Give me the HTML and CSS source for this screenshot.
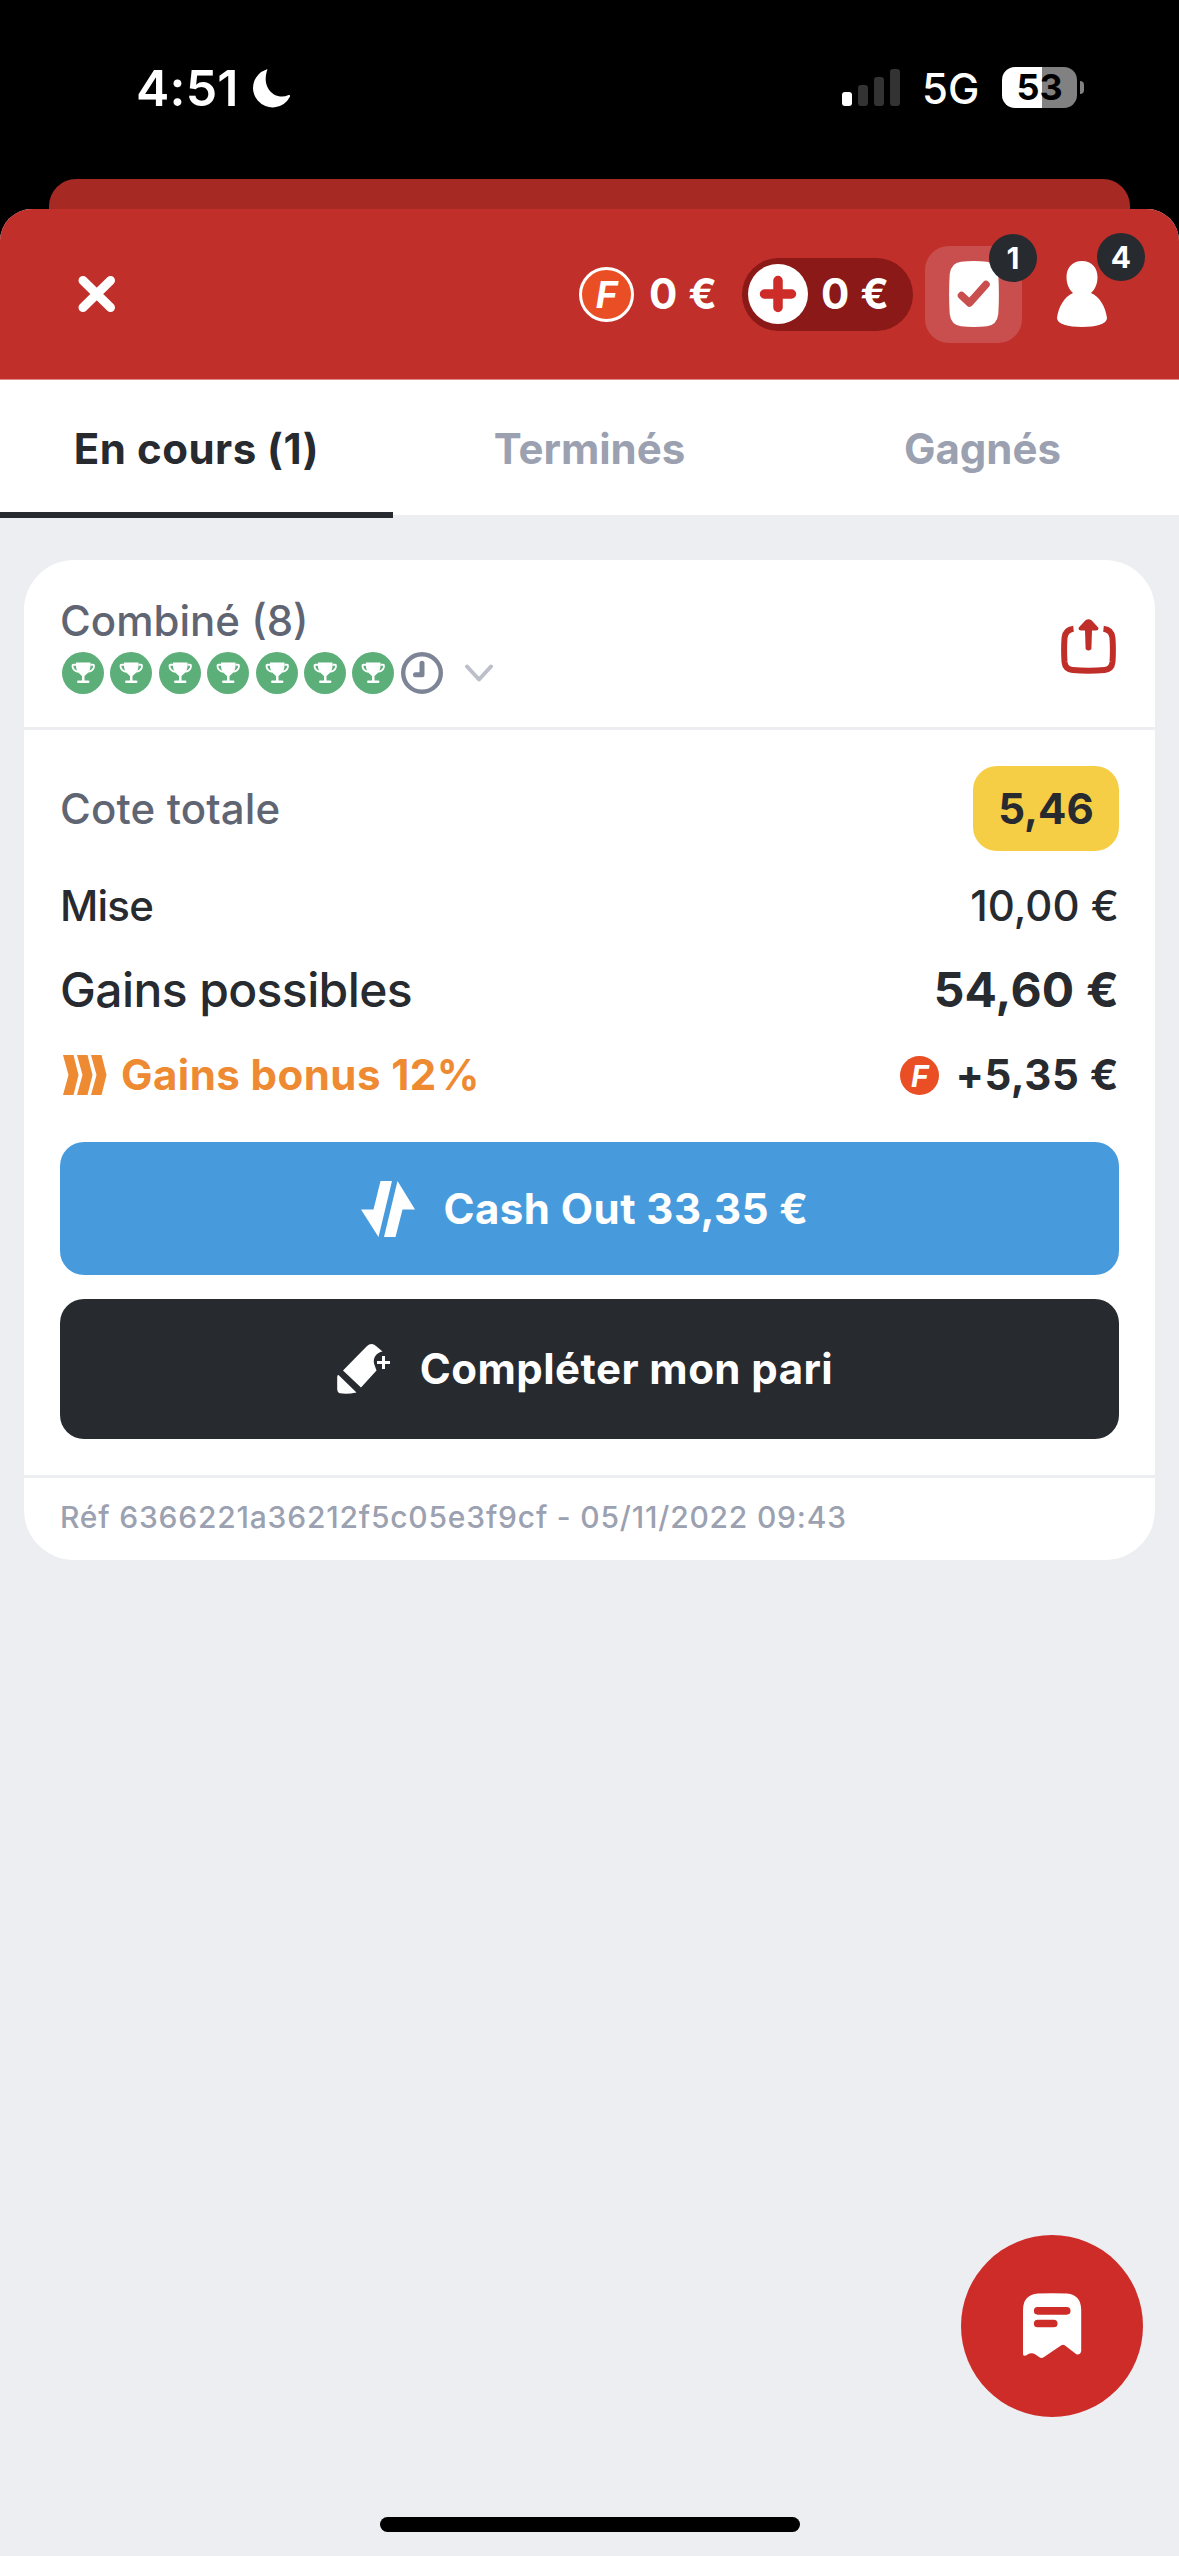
FILE: index.html
```html
<!DOCTYPE html>
<html lang="fr">
<head>
<meta charset="utf-8">
<title>Mes paris</title>
<link rel="stylesheet" href="styles.css">
</head>
<body>
<svg class="defs" width="0" height="0" aria-hidden="true">
  <symbol id="trophy" viewBox="0 0 42 42">
    <circle cx="21" cy="21" r="21" fill="#5caf78"/>
    <path d="M14 10.500h14.500c.3 5.500-.6 8.500-3 10.800l-3 2.700v4.600h3.700a1.200 1.200 0 0 1 0 2.500H16.300a1.200 1.200 0 0 1 0-2.500H20V24l-3-2.700c-2.400-2.300-3.300-5.300-3-10.800z" fill="#fff"/>
    <path d="M14 12.700h-2.500q-1 0-1 1c0 3.300 1.800 5.300 5.500 6M28.500 12.700H31q1 0 1 1c0 3.300-1.800 5.300-5.500 6" fill="none" stroke="#fff" stroke-width="1.900"/>
  </symbol>
</svg>

<div class="status">
  <span class="time">4:51</span>
  <svg class="moon" width="40" height="40" viewBox="0 0 40 40"><path d="M15.500.4C17 0 16 1.400 15.600 3 13 13 16 21 23 25.500c5 2.600 10 2.500 14 .8 2-.8 2.400 0 1.900 1.500A19.500 19.500 0 1 1 15.500.4z" fill="#fff"/></svg>
  <svg class="signal" width="58" height="38" viewBox="0 0 58 38"><rect x="0" y="24" width="10" height="14" rx="3" fill="#fff"/><g fill="#333"><rect x="16" y="17" width="10" height="21" rx="3"/><rect x="32" y="9" width="10" height="29" rx="3"/><rect x="48" y="1" width="10" height="37" rx="3"/></g></svg>
  <span class="net">5G</span>
  <span class="battery">53</span>
  <span class="nub"></span>
</div>
<div class="back-sheet"></div>

<main class="sheet">
  <header class="header">
    <svg class="close" width="38" height="38" viewBox="0 0 38 38"><path d="M5 5.500l27.500 27M32.500 5.500L5 32.500" stroke="#fff" stroke-width="9" stroke-linecap="round"/></svg>
    <div class="freebet"><span class="coin">F</span><span class="amount">0 €</span></div>
    <div class="wallet">
      <svg width="60" height="60" viewBox="0 0 60 60"><circle cx="30" cy="30" r="30" fill="#fff"/><path d="M30 16.500v27M16.500 30h27" stroke="#ce2c28" stroke-width="9.500" stroke-linecap="round"/></svg>
      <span class="amount">0 €</span>
    </div>
    <div class="bets">
      <svg width="50" height="66" viewBox="0 0 50 66"><path d="M12 .8Q25-.8 38 .8 48 2 49.300 13 50.500 33 49.300 53 48 64 38 65.200 25 66.800 12 65.200 2 64 .7 53-.5 33 .7 13 2 2 12 .8z" fill="#fff"/><path d="M12.500 34.500l8 7.500L37 23.500" fill="none" stroke="#c94f4e" stroke-width="7.500" stroke-linecap="round" stroke-linejoin="round"/></svg>
      <span class="badge">1</span>
    </div>
    <div class="profile">
      <svg width="50" height="66" viewBox="0 0 50 66"><path d="M25 0c10 0 15.500 7 15.500 16 0 7-2.500 12.500-6.500 16C43 36 48.500 46 50 57c0 6-11 9-25 9S0 63 0 57C1.500 46 7 36 16 32c-4-3.500-6.500-9-6.500-16C9.500 7 15 0 25 0z" fill="#fff"/></svg>
      <span class="badge">4</span>
    </div>
  </header>

  <nav class="tabs">
    <a class="tab active">En cours (1)</a>
    <a class="tab">Terminés</a>
    <a class="tab">Gagnés</a>
  </nav>

  <article class="card">
    <div class="card-head">
      <div>
        <div class="kind">Combiné (8)</div>
        <div class="legs">
          <svg><use href="#trophy"/></svg><svg><use href="#trophy"/></svg><svg><use href="#trophy"/></svg><svg><use href="#trophy"/></svg><svg><use href="#trophy"/></svg><svg><use href="#trophy"/></svg><svg><use href="#trophy"/></svg>
          <svg viewBox="0 0 42 42" fill="none" stroke="#7c8496"><circle cx="21" cy="21" r="18.800" stroke-width="4.400"/><path d="M21 11.200V22.800h-6.500" stroke-width="5" stroke-linecap="round" stroke-linejoin="round"/></svg>
          <svg class="chevron" viewBox="0 0 28 18"><path d="M2 2.500l12 13 12-13" fill="none" stroke="#bcbfca" stroke-width="4" stroke-linecap="round" stroke-linejoin="round"/></svg>
        </div>
      </div>
      <svg class="share" width="55" height="56" viewBox="0 0 55 56"><path d="M12.500 9.800C6 10.500 4 14 3.500 19c-.6 9-.6 15 0 24 .5 5 3 7.500 8 8 10 .8 22 .8 32 0 5-.5 7.500-3 8-8 .6-9 .6-15 0-24C51 14 49 10.500 42.500 9.800" fill="none" stroke="#c02e2a" stroke-width="6"/><path d="M24.500 1.200q3-2 6 0l6.500 7q1.500 3-2 3.300h-4l-.6 18.500q-2.900 3-5.800 0L24 11.500h-4q-3.500-.3-2-3.300z" fill="#c02e2a"/></svg>
    </div>

    <div class="card-body">
      <div class="row odds"><span class="muted">Cote totale</span><b class="odds-value">5,46</b></div>
      <div class="row stake"><span class="stake-label">Mise</span><span>10,00 €</span></div>
      <div class="row win"><span class="win-label">Gains possibles</span><b>54,60 €</b></div>
      <div class="row bonus">
        <svg width="44" height="40" viewBox="0 0 44 40" fill="#ee8a32"><path d="M0 0h10.500L15.500 20 10.500 40H0l5.500-20zM14 0h10.500l5 20-5 20H14l5.500-20zM28 0h10.500l5 20-5 20H28l5.500-20z"/></svg>
        <span class="bonus-label">Gains bonus 12%</span>
        <i class="coin small">F</i>
        <b class="bonus-value">+5,35 €</b>
      </div>
      <button class="btn cashout">
        <svg width="54" height="56" viewBox="0 0 54 56" fill="#fff"><path d="M19.500 0H31L17.500 56 0 28.500h12.500zM36.500 0L54 28.500H41.500L34.500 56H23z"/></svg>
        <span>Cash Out 33,35 €</span>
      </button>
      <button class="btn complete">
        <svg width="53" height="50" viewBox="0 0 53 50" fill="#fff"><path d="M29.500 2.500q5-4.500 9.500-.5l6.500 5.500c-7 1.500-9.500 7-8.500 12l2.500 7L24 43.500 6 26.500zM1.500 31l18 17.500Q10 50.500 3 49.300 0 48.500.2 44V33q.2-2.500 1.300-2zM45 12h3v5h5v3h-5v5h-3v-5h-5v-3h5z"/></svg>
        <span>Compléter mon pari</span>
      </button>
    </div>
    <div class="card-foot">Réf 6366221a36212f5c05e3f9cf - 05/11/2022 09:43</div>
  </article>
</main>

<button class="fab"><svg width="59" height="66" viewBox="0 0 59 66"><path d="M0 17Q0 2 15 .6 29 0 44 .6 58 2 58.200 17V58q-.7 4-4.500 3.500L42 52.500q-2-1.300-4 0L21 64q-2.500 1.800-5 0l-3.500-2.500q-4-2.500-8 0Q1 64 0 61.500z" fill="#fff"/><path d="M14.700 17.800h29M14.700 30.500h16" stroke="#ce2c28" stroke-width="7.700" stroke-linecap="round"/></svg></button>
<div class="home"></div>
</body>
</html>
```
FILE: styles.css
```css
* { box-sizing: border-box; }

body {
  margin: 0;
  width: 1179px;
  height: 2556px;
  position: relative;
  overflow: hidden;
  background: #000;
  color: #272a2f;
  font-family: Inter, "Liberation Sans", sans-serif;
  font-size: 42px;
  line-height: 50px;
}

svg { display: block; flex: none; }
.defs { position: absolute; }
button { border: 0; margin: 0; padding: 0; font: inherit; color: inherit; }

/* status bar */
.status {
  height: 179px;
  padding: 63px 95px 0 136px;
  display: flex;
  align-items: flex-start;
  color: #fff;
}
.time { width: 115px; font-size: 50px; font-weight: 600; letter-spacing: 0.2px; }
.moon { margin-top: 6px; }
.signal { margin: 5px 22px 0 auto; }
.net { width: 80px; margin-top: 1px; font-weight: 500; }
.battery {
  width: 75px;
  height: 41px;
  margin-top: 4px;
  border-radius: 13px;
  background: linear-gradient(90deg, #fff 40px, #818181 40px);
  color: #000;
  font-size: 36px;
  line-height: 41px;
  font-weight: 700;
  text-align: center;
}
.nub { width: 4px; height: 13px; margin: 18px 0 0 3px; border-radius: 0 4px 4px 0; background: #818181; }

/* sheets */
.back-sheet { height: 30px; margin: 0 49px; border-radius: 27px 27px 0 0; background: #a72924; }
.sheet {
  height: 2347px;
  background: #edeef2;
  border-radius: 32px 32px 0 0;
  overflow: hidden;
}

.header {
  height: 171px;
  padding: 0 72px 0 78px;
  display: flex;
  align-items: center;
  background: #c02f2a;
  border-bottom: 1px solid #dc8b88;
  color: #fff;
}
.freebet { margin-left: auto; width: 163px; display: flex; align-items: center; gap: 15px; }
.coin {
  width: 55px;
  height: 55px;
  flex: none;
  border: 3px solid #fff;
  border-radius: 50%;
  background: #ea4e24;
  color: #fff;
  font-size: 37px;
  line-height: 49px;
  font-weight: 700;
  font-style: italic;
  text-align: center;
}
.amount { font-weight: 650; white-space: nowrap; letter-spacing: 0.5px; }
.wallet {
  width: 171px;
  height: 73px;
  padding-left: 6px;
  display: flex;
  align-items: center;
  gap: 13px;
  border-radius: 37px;
  background: #8a1917;
}
.bets {
  position: relative;
  width: 97px;
  height: 97px;
  margin: 0 35px 0 12px;
  display: flex;
  align-items: center;
  justify-content: center;
  border-radius: 24px;
  background: #c94f4e;
}
.profile { position: relative; }
.badge {
  position: absolute;
  top: -12px;
  right: -15px;
  width: 48px;
  height: 48px;
  border-radius: 50%;
  background: #272a2f;
  font-size: 30px;
  line-height: 48px;
  font-weight: 700;
  text-align: center;
}
.profile .badge { top: -28px; right: -38px; }

/* tabs */
.tabs { height: 135px; display: grid; grid-template-columns: repeat(3, 1fr); background: #fff; }
.tab { height: 138px; line-height: 137px; text-align: center; font-weight: 700; color: #9ba1b0; }
.tab.active { color: #272a2f; border-bottom: 6px solid #272a2f; letter-spacing: 0.5px; }

/* bet card */
.card { margin: 45px 24px 0; border-radius: 50px; background: #fff; overflow: hidden; }
.card-head {
  height: 170px;
  padding: 36px 39px 0 36px;
  display: flex;
  justify-content: space-between;
  border-bottom: 3px solid #edeef2;
}
.kind { color: #5f6573; font-weight: 500; }
.legs { display: flex; align-items: center; gap: 6.4px; margin: 6px 0 0 2px; }
.legs svg { width: 42px; height: 42px; }
.legs .chevron { width: 28px; height: 18px; margin-left: 16px; }
.share { margin-top: 23px; }

.card-body { height: 745px; padding: 36px 36px 0; }
.row { height: 50px; display: flex; justify-content: space-between; align-items: center; font-weight: 500; white-space: nowrap; }
.row b { font-weight: 700; }
.odds { height: 85px; }
.muted { color: #5f6573; letter-spacing: 0.15px; }
.odds-value { width: 146px; line-height: 85px; border-radius: 24px; background: #f6ce46; text-align: center; }
.stake { margin-top: 30px; }
.stake-label { letter-spacing: -0.8px; }
.win { margin-top: 34px; font-size: 48px; }
.win b { letter-spacing: 0.2px; }
.win-label { letter-spacing: -0.6px; }
.bonus { margin-top: 35px; padding-left: 3px; justify-content: flex-start; }
.bonus-label { margin-left: 14px; font-weight: 700; letter-spacing: 0.45px; color: #ee8a32; }
.row .bonus-value { letter-spacing: 0.5px; }
.coin.small { width: 39px; height: 39px; margin: 0 16px 0 auto; border: 0; font-size: 30px; line-height: 40px; }

.btn {
  width: 100%;
  padding-right: 9px;
  display: flex;
  align-items: center;
  justify-content: center;
  gap: 28px;
  border-radius: 24px;
  color: #fff;
  font-weight: 700;
  letter-spacing: 0.45px;
}
.cashout { height: 133px; margin-top: 42px; background: #479bdd; }
.complete { height: 140px; margin-top: 24px; background: #272a2f; gap: 30px; }

.card-foot {
  height: 85px;
  padding: 0 36px;
  border-top: 3px solid #edeef2;
  font-size: 30px;
  line-height: 79px;
  font-weight: 500;
  letter-spacing: 0.8px;
  color: #9ba1b0;
}

/* floating bet slip */
.fab {
  position: absolute;
  left: 961px;
  top: 2235px;
  width: 182px;
  height: 182px;
  display: flex;
  align-items: center;
  justify-content: center;
  border-radius: 50%;
  background: #ce2c28;
}
.home { position: absolute; left: 380px; bottom: 24px; width: 420px; height: 15px; border-radius: 8px; background: #000; }
```
